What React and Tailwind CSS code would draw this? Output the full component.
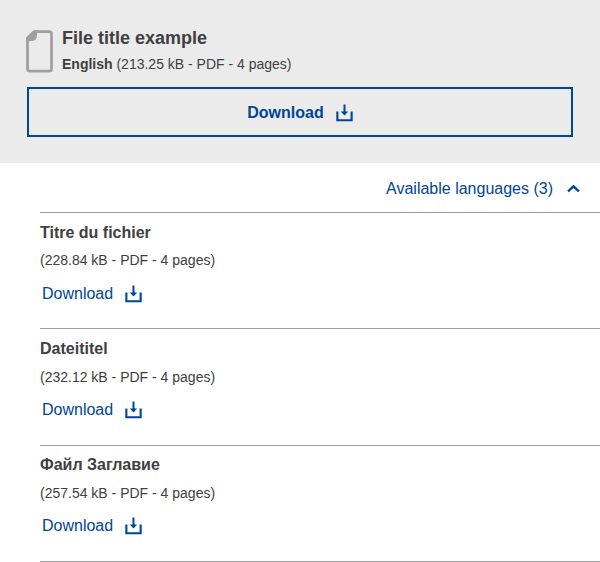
function DownloadIcon() {
  return (
    <svg className="h-[18px] w-[18px] shrink-0" viewBox="0 0 18 18" fill="#004696" aria-hidden="true">
      <path d="M0.3 7.4H2.4V15.2H14.6V7.4H16.7V17.2H0.3Z" />
      <path d="M7.5 0.5H9.5V7.4H12.2L8.5 11.4L4.8 7.4H7.5Z" />
    </svg>
  );
}

function FileIcon() {
  return (
    <svg className="h-[43px] w-[27px] shrink-0" viewBox="0 0 27 43" fill="none" aria-hidden="true">
      <path
        d="M8.5 1.7H23.3Q25.5 1.7 25.5 3.9V38.9Q25.5 41.1 23.3 41.1H3.7Q1.5 41.1 1.5 38.9V8.5Z"
        stroke="#9f9f9f"
        strokeWidth="2.7"
      />
      <path d="M7.5 0.4H11V5.5Q10.6 11 5.5 11H0.2V7.5Z" fill="#9f9f9f" />
    </svg>
  );
}

const translations = [
  { title: 'Titre du fichier', meta: '(228.84 kB - PDF - 4 pages)', row: 'h-[116px] pt-[9px]', metaGap: 'mt-1.5' },
  { title: 'Dateititel', meta: '(232.12 kB - PDF - 4 pages)', row: 'h-[117px] pt-[9px]', metaGap: 'mt-[7px]' },
  { title: 'Файл Заглавие', meta: '(257.54 kB - PDF - 4 pages)', row: 'h-[116px] pt-2', metaGap: 'mt-[7px]' },
];

function Translation({ item, first }) {
  return (
    <li className={`${item.row} border-b border-[#9f9f9f]`}>
      <div className="text-[16px] leading-[22px] font-bold">{item.title}</div>
      <div className={`${item.metaGap} text-[14px] leading-5`}>{item.meta}</div>
      <a
        href="#"
        className={`${first ? 'mt-[14px]' : 'mt-[13px]'} flex w-fit items-center pl-0.5 text-[16px] leading-5 text-[#004696]`}
      >
        Download
        <span className="ml-3">
          <DownloadIcon />
        </span>
      </a>
    </li>
  );
}

export default function App() {
  return (
    <div className="h-[562px] w-[600px] overflow-hidden bg-white font-['Liberation_Sans',Arial,sans-serif] text-[#404040]">
      <section className="h-[163px] bg-[#ebebeb] px-[27px] pt-[26px]">
        <div className="-ml-px flex h-[61px]">
          <div className="pt-1">
            <FileIcon />
          </div>
          <div className="ml-[9px]">
            <div className="text-[18px] leading-6 font-bold">File title example</div>
            <div className="mt-1 text-[14px] leading-5">
              <strong>English</strong> (213.25 kB - PDF - 4 pages)
            </div>
          </div>
        </div>
        <button className="flex h-[50px] w-full items-center justify-center border-2 border-[#004696] pt-0.5 pl-px text-[16px] font-bold text-[#004696]">
          Download
          <span className="ml-3">
            <DownloadIcon />
          </span>
        </button>
      </section>
      <div className="flex h-[49px] items-center justify-end pr-5 pt-[3px] text-[16px] text-[#004696]">
        Available languages (3)
        <svg className="ml-[14px] h-2 w-[13px]" viewBox="0 0 13 8" fill="none" stroke="#004696" strokeWidth="2.4" aria-hidden="true">
          <path d="M1 6.5L6.5 1.3L12 6.5" />
        </svg>
      </div>
      <ul className="ml-10 border-t border-[#9f9f9f]">
        {translations.map((item, index) => (
          <Translation key={item.title} item={item} first={index === 0} />
        ))}
      </ul>
    </div>
  );
}
